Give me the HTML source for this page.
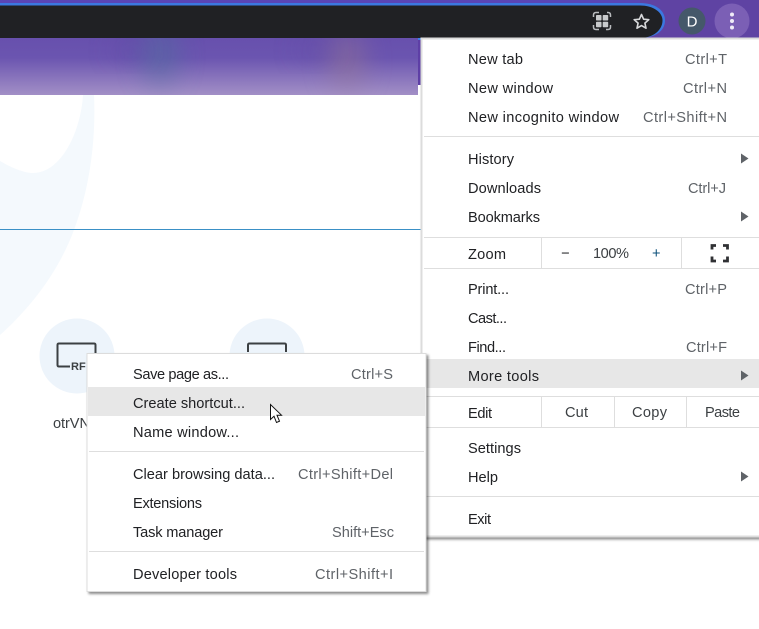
<!DOCTYPE html>
<html><head><meta charset="utf-8"><style>
html,body{margin:0;padding:0;background:#fff;width:759px;height:629px;overflow:hidden}
svg{position:absolute;left:0;top:0;display:block}
text{font-family:"Liberation Sans",sans-serif;font-size:14.6px;fill:#202124}
.s{fill:#5f6368}
.d{fill:#3c4043}
</style></head><body>
<svg width="759" height="629" viewBox="0 0 759 629" xmlns="http://www.w3.org/2000/svg">
<defs>
<linearGradient id="b" x1="0" y1="0" x2="0" y2="1"><stop offset="0" stop-color="#6750ad"/><stop offset=".35" stop-color="#6b55b0"/><stop offset="1" stop-color="#a28fc6"/></linearGradient>
<filter id="bl" x="-100%" y="-100%" width="300%" height="300%"><feGaussianBlur stdDeviation="14"/></filter>
<filter id="sh" x="-5%" y="-5%" width="110%" height="110%"><feDropShadow dx="2" dy="2" stdDeviation="1.2" flood-color="#000" flood-opacity=".45"/></filter>
<clipPath id="cb"><rect x="0" y="38" width="418" height="57"/></clipPath>
</defs>
<!-- top -->
<rect width="759" height="38" fill="#5f43a3"/>
<rect width="640" height="3" fill="#5a45b5"/>
<path d="M0 3H640C655 3 665 10 665 20.500C665 31 655 38 640 38H0Z" fill="#3b78e0"/>
<path d="M0 5.500H640C653 5.500 662.500 12 662.500 20.500C662.500 30 653 38 640 38H0Z" fill="#202124"/>
<!-- toolbar icons -->
<g fill="none" stroke="#b9bbbe" stroke-width="1.500">
<path d="M593.500 17V15Q593.500 12.500 596 12.500H599M607 12.500H608Q610.500 12.500 610.500 15V17M610.500 25V27Q610.500 29.500 608 29.500H606M599 29.500H596Q593.500 29.500 593.500 27V25"/>
</g>
<g fill="#c8cacc"><rect x="596" y="15" width="5.500" height="5.500" rx=".8"/><rect x="602.700" y="15" width="5.500" height="5.500" rx=".8"/><rect x="596" y="21.700" width="5.500" height="5.500" rx=".8"/><rect x="602.700" y="21.700" width="5.500" height="5.500" rx=".8"/></g>
<path d="M641.500 14.500L643.600 19.200L648.800 19.700L644.900 23.100L646 28.200L641.500 25.600L637 28.200L638.100 23.100L634.200 19.700L639.400 19.200Z" fill="none" stroke="#d8d9db" stroke-width="1.600" stroke-linejoin="round"/>
<circle cx="692" cy="21" r="13.500" fill="#45586a"/>
<text x="692" y="26.500" text-anchor="middle" style="fill:#fff;font-size:15px">D</text>
<circle cx="732" cy="21" r="17.500" fill="#7b5fb5"/>
<circle cx="732" cy="14.500" r="2" fill="#f0ecf7"/><circle cx="732" cy="21" r="2" fill="#f0ecf7"/><circle cx="732" cy="27.500" r="2" fill="#f0ecf7"/>
<!-- banner -->
<rect x="418" y="38" width="3" height="47" fill="#5e3fa6"/>
<rect x="418" y="38" width="3" height="2" fill="#3b80e8"/>
<rect x="0" y="38" width="418" height="57" fill="url(#b)"/>
<g clip-path="url(#cb)">
<ellipse cx="160" cy="55" rx="16" ry="30" fill="#4f6f9e" opacity=".6" filter="url(#bl)"/>
<ellipse cx="347" cy="60" rx="16" ry="30" fill="#97788f" opacity=".55" filter="url(#bl)"/>
<ellipse cx="130" cy="50" rx="16" ry="8" fill="#5a459f" opacity=".5" filter="url(#bl)"/>
<ellipse cx="315" cy="50" rx="16" ry="8" fill="#5f4a9f" opacity=".5" filter="url(#bl)"/>
</g>
<!-- page -->
<path d="M83 95C81 130 62 173 33 173C24 173 12 168 0 161V335C30 308 56 275 72 235C90 190 96 140 94 95Z" fill="#f4f9fd"/>
<rect x="0" y="229" width="421" height="1" fill="#3a90c6"/>
<circle cx="77" cy="356" r="37.500" fill="#edf4fb"/>
<circle cx="267" cy="356" r="37.500" fill="#edf4fb"/>
<path d="M95.500 360V345Q95.500 343.500 94 343.500H59Q57.500 343.500 57.500 345V365Q57.500 366.500 59 366.500H70" fill="none" stroke="#3c4043" stroke-width="2"/>
<text x="71" y="370" style="font-size:11px;font-weight:bold;fill:#3c4043">RF</text>
<path d="M248 352V345Q248 343.500 249.500 343.500H284.500Q286 343.500 286 345V352" fill="none" stroke="#3c4043" stroke-width="2"/>
<text x="53" y="428" textLength="37" lengthAdjust="spacing" style="fill:#3c4043">otrVN</text>

<!-- main menu -->
<rect x="421.500" y="38.500" width="340" height="498" fill="#fff" stroke="#dcdcdc" stroke-width="2" filter="url(#sh)"/>
<rect x="423" y="359" width="336" height="29" fill="#e7e7e7"/>
<g fill="#dedede">
<rect x="424" y="136" width="335" height="1"/>
<rect x="424" y="237" width="335" height="1"/>
<rect x="424" y="268" width="335" height="1"/>
<rect x="424" y="396" width="335" height="1"/>
<rect x="424" y="427" width="335" height="1"/>
<rect x="424" y="496" width="335" height="1"/>
<rect x="541" y="238" width="1" height="30"/>
<rect x="681" y="238" width="1" height="30"/>
<rect x="541" y="397" width="1" height="30"/>
<rect x="614" y="397" width="1" height="30"/>
<rect x="686" y="397" width="1" height="30"/>
</g>
<g fill="#5f6368">
<path d="M741 153.500L748.500 158.500L741 163.500Z"/><path d="M741 211.500L748.500 216.500L741 221.500Z"/><path d="M741 370.500L748.500 375.500L741 380.500Z"/><path d="M741 471.500L748.500 476.500L741 481.500Z"/>
</g>
<path d="M712 249.500V245.500H716M723 245.500H727.500V249.500M727.500 256.500V261H723M716 261H712V256.500" fill="none" stroke="#303134" stroke-width="2.800"/>

<text x="468" y="64" textLength="55" lengthAdjust="spacing">New tab</text>
<text x="468" y="93" textLength="85" lengthAdjust="spacing">New window</text>
<text x="468" y="122" textLength="151" lengthAdjust="spacing">New incognito window</text>
<text class="s" x="685" y="64" textLength="42" lengthAdjust="spacing">Ctrl+T</text>
<text class="s" x="683" y="93" textLength="44" lengthAdjust="spacing">Ctrl+N</text>
<text class="s" x="643" y="122" textLength="84" lengthAdjust="spacing">Ctrl+Shift+N</text>
<text x="468" y="164" textLength="46" lengthAdjust="spacing">History</text>
<text x="468" y="193" textLength="73" lengthAdjust="spacing">Downloads</text>
<text x="468" y="222" textLength="72" lengthAdjust="spacing">Bookmarks</text>
<text class="s" x="688" y="193" textLength="38" lengthAdjust="spacing">Ctrl+J</text>
<text x="468" y="259" textLength="38" lengthAdjust="spacing">Zoom</text>
<text x="561" y="258">−</text>
<text class="d" x="593" y="258" textLength="36" lengthAdjust="spacing">100%</text>
<text x="652" y="258" style="fill:#0b4f7a">+</text>
<text x="468" y="294" textLength="41" lengthAdjust="spacing">Print...</text>
<text class="s" x="685" y="294" textLength="42" lengthAdjust="spacing">Ctrl+P</text>
<text x="468" y="323" textLength="39" lengthAdjust="spacing">Cast...</text>
<text x="468" y="352" textLength="38" lengthAdjust="spacing">Find...</text>
<text class="s" x="686" y="352" textLength="41" lengthAdjust="spacing">Ctrl+F</text>
<text x="468" y="381" textLength="71" lengthAdjust="spacing">More tools</text>
<text x="468" y="418" textLength="24" lengthAdjust="spacing">Edit</text>
<text class="d" x="565" y="417" textLength="23" lengthAdjust="spacing">Cut</text>
<text class="d" x="632" y="417" textLength="35" lengthAdjust="spacing">Copy</text>
<text class="d" x="705" y="417" textLength="35" lengthAdjust="spacing">Paste</text>
<text x="468" y="453" textLength="53" lengthAdjust="spacing">Settings</text>
<text x="468" y="482" textLength="30" lengthAdjust="spacing">Help</text>
<text x="468" y="524" textLength="23" lengthAdjust="spacing">Exit</text>

<!-- submenu -->
<rect x="87" y="353.500" width="339" height="238" fill="#fff" stroke="#dcdcdc" filter="url(#sh)"/>
<rect x="88" y="387" width="337" height="29" fill="#e7e7e7"/>
<rect x="89" y="451" width="335" height="1" fill="#dedede"/>
<rect x="89" y="551" width="335" height="1" fill="#dedede"/>
<text x="133" y="379" textLength="96" lengthAdjust="spacing">Save page as...</text>
<text class="s" x="351" y="379" textLength="42" lengthAdjust="spacing">Ctrl+S</text>
<text x="133" y="408" textLength="112" lengthAdjust="spacing">Create shortcut...</text>
<text x="133" y="437" textLength="106" lengthAdjust="spacing">Name window...</text>
<text x="133" y="479" textLength="142" lengthAdjust="spacing">Clear browsing data...</text>
<text class="s" x="298" y="479" textLength="95" lengthAdjust="spacing">Ctrl+Shift+Del</text>
<text x="133" y="508" textLength="69" lengthAdjust="spacing">Extensions</text>
<text x="133" y="537" textLength="90" lengthAdjust="spacing">Task manager</text>
<text class="s" x="332" y="537" textLength="62" lengthAdjust="spacing">Shift+Esc</text>
<text x="133" y="579" textLength="104" lengthAdjust="spacing">Developer tools</text>
<text class="s" x="315" y="579" textLength="78" lengthAdjust="spacing">Ctrl+Shift+I</text>
<!-- cursor -->
<path d="M270.500 404.500V419.500L274 416.200L276.500 422.500L279.500 421.200L277 415.200H281.500Z" fill="#fff" stroke="#111" stroke-width="1" stroke-linejoin="miter"/>
</svg>
</body></html>
